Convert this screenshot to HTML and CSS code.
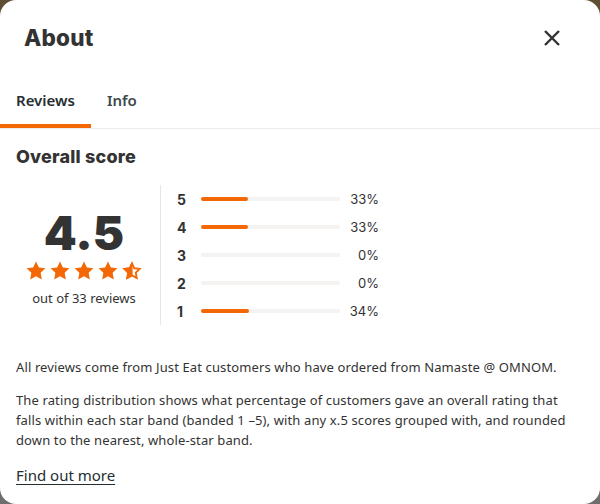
FILE: index.html
```html
<!DOCTYPE html>
<html lang="en">
<head>
<meta charset="utf-8">
<title>About</title>
<link rel="stylesheet" href="styles.css">
</head>
<body>
<div class="modal">
  <header class="header">
    <h1 class="title">About</h1>
    <button class="close" aria-label="Close">
      <svg width="24" height="24" viewBox="0 0 24 24"><path d="M5 5L19 19M19 5L5 19" stroke="#333" stroke-width="2.4" stroke-linecap="butt" fill="none"/></svg>
    </button>
  </header>
  <nav class="tabs">
    <div class="tab active">Reviews</div>
    <div class="tab">Info</div>
  </nav>
  <section class="content">
    <h2 class="subtitle">Overall score</h2>
    <div class="score">
      <div class="summary">
        <div class="big">4.5</div>
        <div class="stars">
          <svg class="star" viewBox="1.2 1.4 21.6 20.4"><path d="M12 1.8l3.1 6.5 7.1.9-5.2 4.9 1.3 7.1L12 17.8l-6.3 3.4 1.3-7.1-5.2-4.9 7.1-.9z" fill="#f36805"/></svg>
          <svg class="star" viewBox="1.2 1.4 21.6 20.4"><path d="M12 1.8l3.1 6.5 7.1.9-5.2 4.9 1.3 7.1L12 17.8l-6.3 3.4 1.3-7.1-5.2-4.9 7.1-.9z" fill="#f36805"/></svg>
          <svg class="star" viewBox="1.2 1.4 21.6 20.4"><path d="M12 1.8l3.1 6.5 7.1.9-5.2 4.9 1.3 7.1L12 17.8l-6.3 3.4 1.3-7.1-5.2-4.9 7.1-.9z" fill="#f36805"/></svg>
          <svg class="star" viewBox="1.2 1.4 21.6 20.4"><path d="M12 1.8l3.1 6.5 7.1.9-5.2 4.9 1.3 7.1L12 17.8l-6.3 3.4 1.3-7.1-5.2-4.9 7.1-.9z" fill="#f36805"/></svg>
          <svg class="star" viewBox="1.2 1.4 21.6 20.4">
            <defs><clipPath id="half"><rect x="0" y="0" width="12.6" height="24"/></clipPath></defs>
            <path d="M12 3.9l2.5 5.3 5.8.7-4.2 4 1 5.8L12 16.9l-5.1 2.8 1-5.8-4.2-4 5.8-.7z" fill="none" stroke="#f36805" stroke-width="2" stroke-linejoin="miter"/>
            <path d="M12 1.8l3.1 6.5 7.1.9-5.2 4.9 1.3 7.1L12 17.8l-6.3 3.4 1.3-7.1-5.2-4.9 7.1-.9z" fill="#f36805" clip-path="url(#half)"/>
          </svg>
        </div>
        <div class="count">out of 33 reviews</div>
      </div>
      <div class="bars">
        <div class="row"><span class="num">5</span><span class="track"><span class="fill" style="width:33.5%"></span></span><span class="pct">33%</span></div>
        <div class="row"><span class="num">4</span><span class="track"><span class="fill" style="width:33.5%"></span></span><span class="pct">33%</span></div>
        <div class="row"><span class="num">3</span><span class="track"><span class="fill" style="width:0%"></span></span><span class="pct">0%</span></div>
        <div class="row"><span class="num">2</span><span class="track"><span class="fill" style="width:0%"></span></span><span class="pct">0%</span></div>
        <div class="row"><span class="num">1</span><span class="track"><span class="fill" style="width:34.5%"></span></span><span class="pct">34%</span></div>
      </div>
    </div>
    <p class="text first">All reviews come from Just Eat customers who have ordered from Namaste @ OMNOM.</p>
    <p class="text">The rating distribution shows what percentage of customers gave an overall rating that falls within each star band (banded 1 –5), with any x.5 scores grouped with, and rounded down to the nearest, whole-star band.</p>
    <a class="more" href="#">Find out more</a>
  </section>
</div>
</body>
</html>
```
FILE: styles.css
```css
html, body {
  margin: 0;
  padding: 0;
}
body {
  width: 600px;
  height: 504px;
  background: linear-gradient(180deg, #5e4e33 0%, #6a665c 40%, #6e6e6e 100%);
  font-family: "Noto Sans", "Open Sans", sans-serif;
  color: #333;
  overflow: hidden;
}
.modal {
  width: 600px;
  height: 504px;
  background: #fff;
  border-radius: 16px;
  overflow: hidden;
  box-sizing: border-box;
}
.header {
  height: 74px;
  display: flex;
  align-items: center;
  justify-content: space-between;
  padding: 0 36px 0 24px;
}
.title {
  margin: 0;
  font-family: "Inter", sans-serif;
  font-weight: 800;
  font-size: 22.5px;
  color: #333;
  letter-spacing: 0.2px;
}
.close {
  border: 0;
  background: none;
  padding: 0;
  width: 24px;
  height: 24px;
  margin-top: 2px;
  display: flex;
}
.tabs {
  display: flex;
  border-bottom: 1px solid #ebebeb;
}
.tab {
  padding: 16px 16px 14px;
  line-height: 20px;
  font-size: 15px;
  font-weight: 600;
  color: #3d4a4d;
  border-bottom: 4px solid transparent;
}
.tab.active {
  color: #242e30;
  border-bottom-color: #f36805;
  border-radius: 2px 2px 0 0;
}
.content {
  padding: 16px 16px 0;
}
.subtitle {
  margin: 0;
  font-family: "Inter", sans-serif;
  font-weight: 800;
  font-size: 18px;
  line-height: 24px;
  letter-spacing: 0.2px;
  color: #333;
}
.score {
  display: flex;
  margin-top: 16px;
  height: 140px;
}
.summary {
  width: 136px;
  padding-right: 8px;
  border-right: 1px solid #e6e6e6;
  display: flex;
  flex-direction: column;
  align-items: center;
  justify-content: center;
}
.big {
  font-family: "Inter", sans-serif;
  font-weight: 900;
  font-size: 47px;
  line-height: 48px;
  color: #333;
  letter-spacing: 0;
  margin-top: 6px;
}
.stars {
  display: flex;
  gap: 4px;
  margin-top: 4px;
}
.star {
  width: 20px;
  height: 19px;
  display: block;
}
.count {
  font-size: 13px;
  line-height: 18px;
  margin-top: 9px;
  color: #333;
}
.bars {
  padding-left: 16px;
  display: flex;
  flex-direction: column;
}
.row {
  height: 28px;
  display: grid;
  grid-template-columns: 24px 139px 39px;
  align-items: center;
}
.num {
  font-family: "Inter", sans-serif;
  font-weight: 700;
  font-size: 14px;
  color: #333;
}
.track {
  height: 4px;
  background: #f5f3f1;
  border-radius: 2px;
  display: block;
}
.fill {
  display: block;
  height: 4px;
  background: #f36805;
  border-radius: 2px;
}
.pct {
  text-align: right;
  font-family: "Inter", sans-serif;
  font-size: 13px;
  color: #333;
}
.text {
  margin: 0;
  font-size: 13px;
  letter-spacing: 0.12px;
  line-height: 20px;
  color: #333;
}
.text.first {
  margin-top: 32px;
  margin-bottom: 13px;
}
.more {
  display: inline-block;
  margin-top: 14px;
  font-size: 15px;
  line-height: 22px;
  color: #242e30;
  text-decoration: underline;
  text-underline-offset: 3px;
}
```
